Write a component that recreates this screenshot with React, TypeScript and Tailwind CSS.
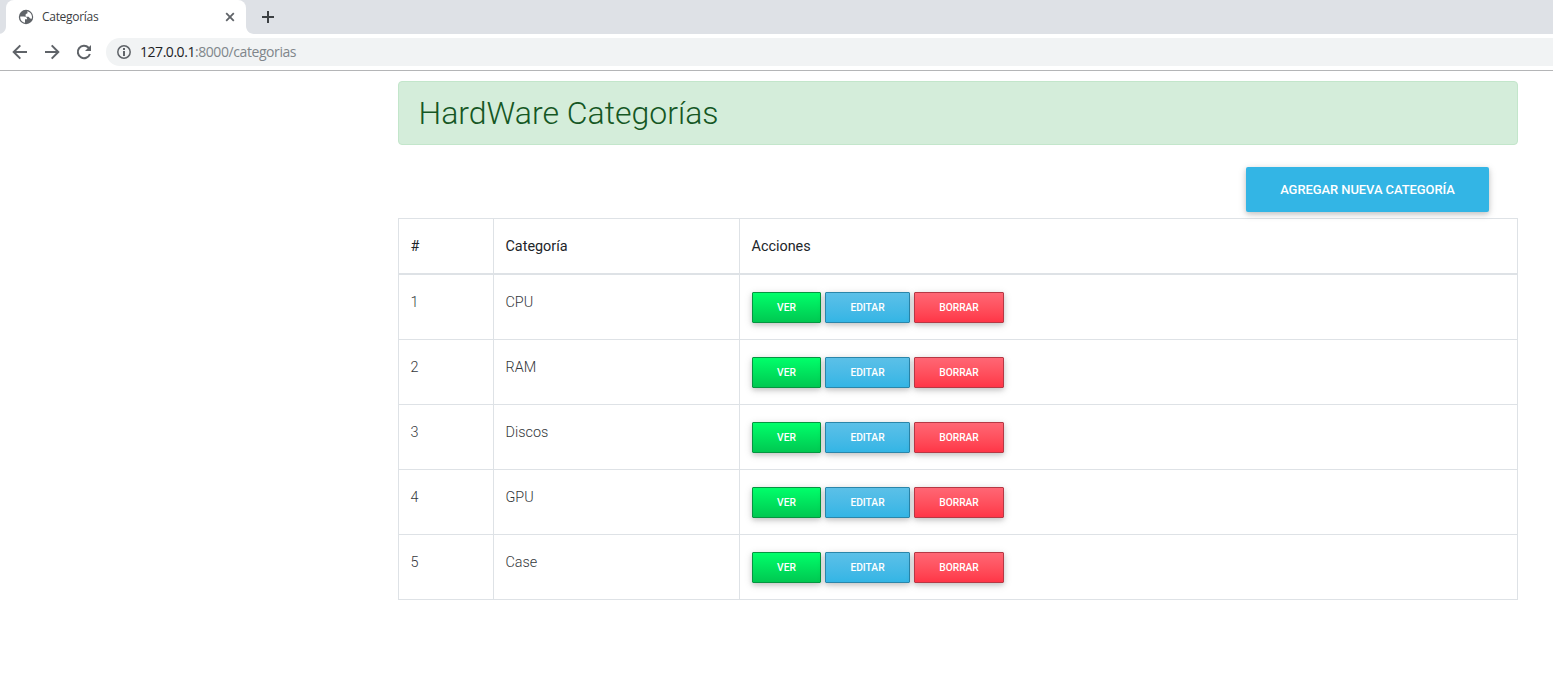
import React from "react";

const categories = ["CPU", "RAM", "Discos", "GPU", "Case"];

const buttonBase =
  "flex h-[31px] items-center justify-center rounded-[1px] border pt-px text-[10.24px] font-medium leading-none text-white shadow-[0_2px_5px_0_rgba(0,0,0,0.16),0_2px_10px_0_rgba(0,0,0,0.12)]";

function GlobeIcon() {
  return (
    <svg className="ml-[12px] size-[16px] shrink-0" viewBox="0 0 16 16">
      <circle cx="8" cy="8" r="7.2" fill="#5f6368" />
      <path
        d="M2.2 7.6h3.6c2.2 0 3.400.9 3.400 2.600H7v3.600C4.200 13.500 2 11 2.200 7.600z"
        fill="#fff"
      />
      <path
        d="M9.200 2.200c2.800.5 4.800 2.900 4.800 5.800 0 .5-.1 1-.2 1.400-.5.400-1.300.4-1.900-.1-.6-.5-.6-1.300-1.500-1.500H7.600V5.900c0-.8.400-1.200 1.100-1.200.6 0 .9-.5.8-1.100z"
        fill="#fff"
      />
    </svg>
  );
}

function Tab() {
  return (
    <div className="relative ml-[6px] flex h-[34px] w-[240px] items-center rounded-t-[8px] bg-white">
      <GlobeIcon />
      <span className="ml-[8px] text-[12px] leading-4 tracking-[-0.3px] text-[#3c4043]">Categorías</span>
      <svg className="ml-auto mr-[11px] size-[10px]" viewBox="0 0 10 10" fill="none" stroke="#5f6368" strokeWidth="1.8">
        <path d="M1.2 1.2l7.6 7.6M8.8 1.2L1.2 8.8" />
      </svg>
      <svg className="absolute -left-[6px] bottom-0 h-[8px] w-[6px]" viewBox="0 0 6 8" fill="#fff">
        <path d="M6 0v8H0V7.8C4 7 6 4 6 0z" />
      </svg>
      <svg className="absolute -right-[8px] bottom-0 size-[8px]" viewBox="0 0 8 8" fill="#fff">
        <path d="M0 0v8h8C3.6 8 0 4.4 0 0z" />
      </svg>
    </div>
  );
}

function Browser() {
  return (
    <header className="font-['Open_Sans','Noto_Sans',sans-serif]">
      <div className="flex h-[34px] items-center bg-[#dee1e6]">
        <Tab />
        <svg className="ml-[16px] size-[12px]" viewBox="0 0 12 12" fill="none" stroke="#3c4043" strokeWidth="2">
          <path d="M6 0v12M0 6h12" />
        </svg>
      </div>
      <div className="flex h-[37px] items-center border-b border-[#b4b5b7] bg-white">
        <svg className="ml-[12px] size-[16px]" viewBox="0 0 16 16" fill="none" stroke="#5f6368" strokeWidth="2">
          <path d="M15 8H2M8.3 1.4L1.7 8l6.6 6.6" />
        </svg>
        <svg className="ml-[16px] size-[16px]" viewBox="0 0 16 16" fill="none" stroke="#5f6368" strokeWidth="2">
          <path d="M1 8h13M7.7 1.4L14.3 8l-6.6 6.6" />
        </svg>
        <svg className="ml-[16px] size-[16px]" viewBox="0 0 16 16" fill="none" stroke="#5f6368" strokeWidth="2">
          <path d="M13.9 10A6.2 6.2 0 1 1 12.6 3.8L14 5.2" />
          <path d="M15 1v6H9z" fill="#5f6368" stroke="none" />
        </svg>
        <div className="ml-[14px] flex h-[28px] grow items-center rounded-l-full bg-[#f1f3f4]">
          <svg className="ml-[11px] size-[14px]" viewBox="0 0 14 14" fill="none" stroke="#5f6368" strokeWidth="1.5">
            <circle cx="7" cy="7" r="6.2" />
            <path d="M7 6v5M7 3v2" strokeWidth="2" />
          </svg>
          <span className="ml-[9px] text-[14px] leading-5 tracking-[-0.42px] text-[#202124]">
            <span className="tracking-[-0.46px]">127.0.0.1</span>
            <span className="text-[#80868b]">:8000/categorias</span>
          </span>
        </div>
      </div>
    </header>
  );
}

function Row({ index, name }: { index: number; name: string }) {
  return (
    <div className="grid h-[65px] grid-cols-[95px_246px_1fr] border-b border-[#dee2e6] text-[14.4px] font-light leading-[22px] text-[#34383c]">
      <div className="border-r border-[#dee2e6] pl-[11.5px] pt-[17px]">{index}</div>
      <div className="border-r border-[#dee2e6] pl-[11.5px] pt-[17px]">{name}</div>
      <div className="flex items-start gap-[4px] pl-[12px] pt-[17px]">
        <button className={`${buttonBase} w-[69px] border-[#059540] bg-linear-to-b from-[#00ff6a] to-[#00c851]`}>VER</button>
        <button className={`${buttonBase} w-[85px] border-[#2a86aa] bg-linear-to-b from-[#5bc0e8] to-[#33b5e5]`}>EDITAR</button>
        <button className={`${buttonBase} w-[90px] border-[#b63844] bg-linear-to-b from-[#ff6674] to-[#ff3547]`}>BORRAR</button>
      </div>
    </div>
  );
}

export default function App() {
  return (
    <div className="h-[687px] overflow-hidden bg-white">
      <Browser />
      <main className="ml-[398px] w-[1120px] pt-[10px] font-['Roboto',sans-serif]">
        <h1 className="flex h-[64px] items-center rounded-[4px] border border-[#c3e6cb] bg-[#d4edda] pl-[19.5px] text-[32px] font-light leading-[38px] text-[#155724]">
          HardWare Categorías
        </h1>
        <div className="mt-[22px] flex justify-end pr-[29px]">
          <button className="h-[45px] w-[243px] rounded-[2px] bg-[#33b5e5] text-[12.96px] font-medium tracking-[-0.06px] text-white shadow-[0_2px_5px_0_rgba(0,0,0,0.16),0_2px_10px_0_rgba(0,0,0,0.12)]">
            AGREGAR NUEVA CATEGORÍA
          </button>
        </div>
        <section className="mt-[6px] border border-b-0 border-[#dee2e6]">
          <div className="grid h-[56px] grid-cols-[95px_246px_1fr] border-b-2 border-[#dee2e6] text-[14.4px] leading-[22px] text-[#212529]">
            <div className="border-r border-[#dee2e6] pl-[11.5px] pt-[17px]">#</div>
            <div className="border-r border-[#dee2e6] pl-[11.5px] pt-[17px]">Categoría</div>
            <div className="pl-[11.5px] pt-[17px]">Acciones</div>
          </div>
          {categories.map((name, i) => (
            <Row key={name} index={i + 1} name={name} />
          ))}
        </section>
      </main>
    </div>
  );
}
